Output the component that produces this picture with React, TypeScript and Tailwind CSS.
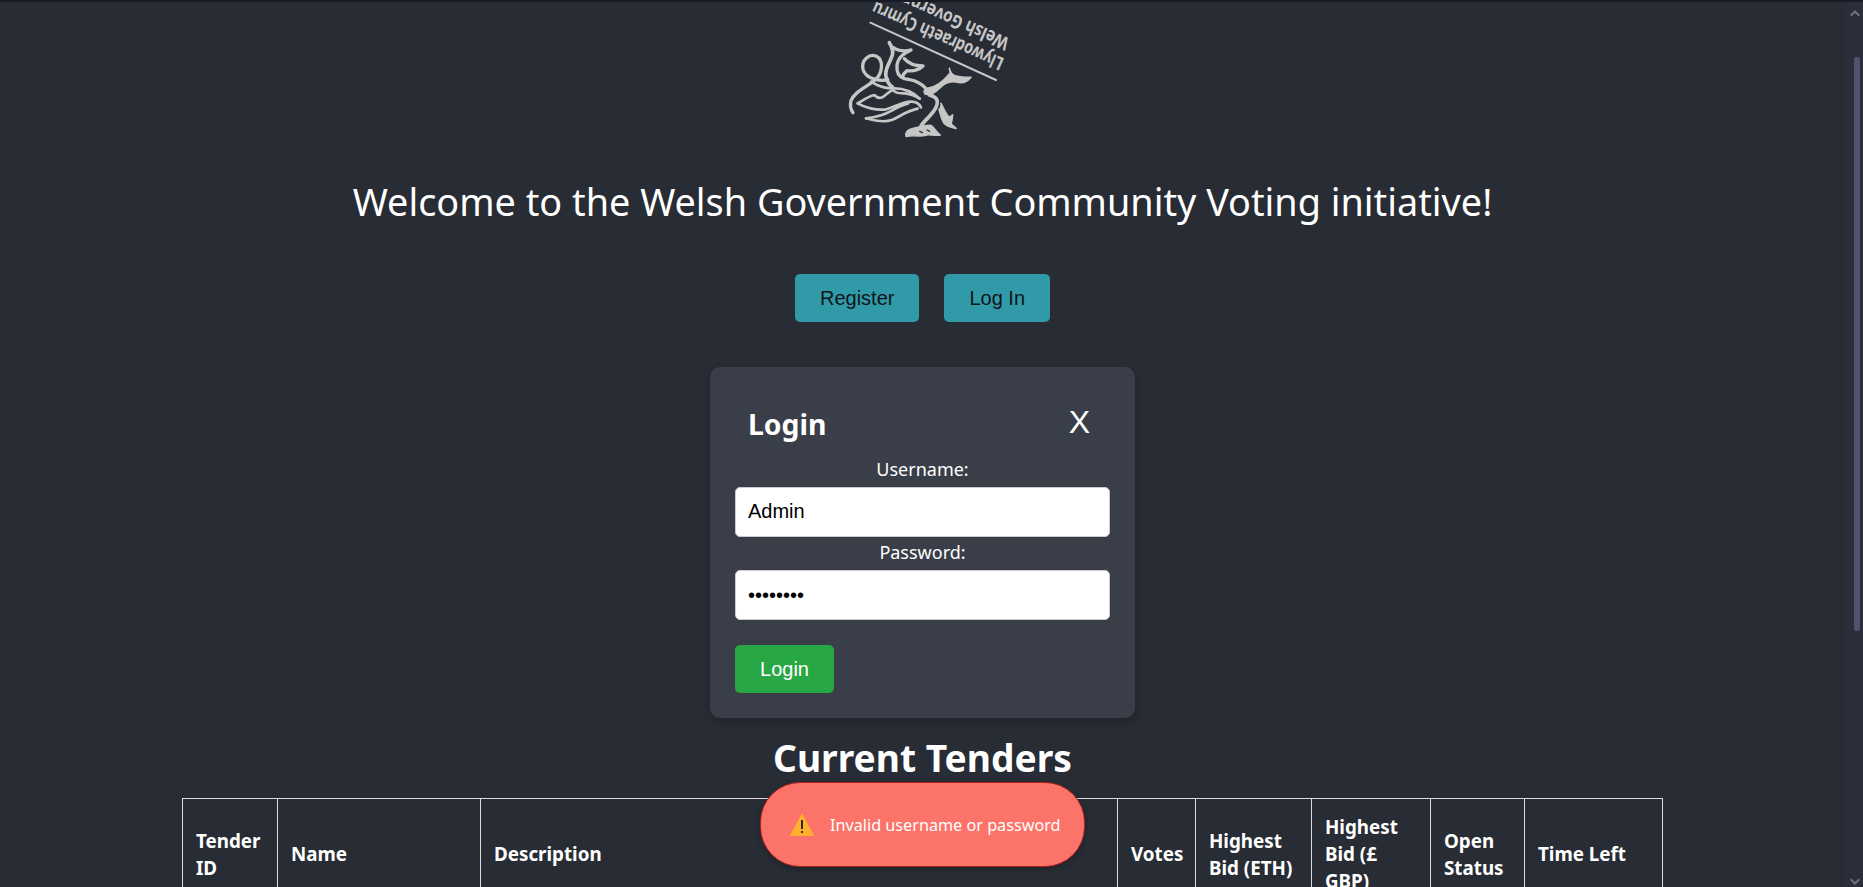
import React from "react";

const uiFont = "font-['Noto_Sans',sans-serif]";

const headers = ["Tender ID", "Name", "Description", "Votes", "Highest Bid (ETH)", "Highest Bid (£ GBP)", "Open Status", "Time Left"];
const widths = ["w-[95px]", "w-[203px]", "w-[637px]", "w-[78px]", "w-[116px]", "w-[119px]", "w-[94px]", "w-[138px]"];

const Logo = () => (
  <svg className="block ml-4 shrink-0" width="220" height="148" viewBox="0 6 660 444" fill="none" stroke="#c6c6c6" strokeWidth="8" strokeLinecap="round" strokeLinejoin="round">
    <text transform="rotate(204 552 176)" x="552" y="176" fill="#c6c6c6" stroke="none" fontFamily="'Noto Sans',sans-serif" fontWeight="700" fontSize="56" textLength="425" lengthAdjust="spacingAndGlyphs">Llywodraeth Cymru</text>
    <text transform="rotate(204 568 116)" x="568" y="116" fill="#c6c6c6" stroke="none" fontFamily="'Noto Sans',sans-serif" fontWeight="700" fontSize="56" textLength="440" lengthAdjust="spacingAndGlyphs">Welsh Government</text>
    <path d="M148 68L525 240" strokeWidth="6" />
    {/* tail loop */}
    <path d="M200 238C185 245 135 240 126 208C120 180 145 160 165 168C190 180 185 222 160 242C135 262 100 275 90 302C86 318 90 330 96 338" strokeWidth="10" />
    {/* back and neck */}
    <path d="M205 128C212 140 218 150 214 165C205 195 190 205 195 230C198 245 205 255 215 262" strokeWidth="11" />
    <path d="M216 142C235 155 250 155 270 150C250 160 232 170 228 195C226 215 232 230 250 236C275 240 300 245 318 270" strokeWidth="10" />
    <path d="M250 176C262 190 285 198 306 198C295 208 275 214 258 212C250 218 246 224 244 232" strokeWidth="10" />
    {/* forked limb */}
    <path d="M385 205C388 218 392 225 405 228C420 232 435 232 450 232C440 245 425 252 405 246C385 242 370 250 355 265C342 278 325 285 312 282C306 275 310 266 322 264C345 262 370 240 385 222" fill="#c6c6c6" strokeWidth="5" />
    <path d="M325 285C345 290 355 300 345 322C335 345 310 360 300 378" strokeWidth="11" />
    <path d="M360 310C368 325 375 345 385 352L395 345C394 355 392 365 390 372L405 385C390 382 375 378 368 368C360 355 358 340 354 328" fill="#c6c6c6" strokeWidth="5" />
    {/* head */}
    <path d="M255 410C252 398 258 388 275 385C295 382 315 372 330 376C340 382 342 392 358 405C345 408 330 404 318 405C295 412 275 404 255 410Z" fill="#c6c6c6" strokeWidth="4" />
    <path d="M296 394L304 398M318 390L326 394" stroke="#282c34" strokeWidth="4" />
    {/* wing folds */}
    <path d="M110 310C130 298 145 288 160 285C170 296 180 296 190 288C200 280 208 272 216 270C226 282 240 280 252 280C270 282 285 288 296 296" strokeWidth="8" />
    <path d="M110 310C130 322 165 332 195 328C220 322 245 305 270 305C285 305 295 312 300 322" strokeWidth="8" />
    <path d="M135 355C165 352 190 345 212 332C228 322 245 314 262 310" strokeWidth="8" />
    <path d="M135 355C160 362 190 368 212 360C235 352 250 335 290 326" strokeWidth="8" />
    <path d="M150 245C170 258 190 266 215 265C240 264 270 270 296 296" strokeWidth="8" />
  </svg>
);

const App = () => {
  return (
    <div className={`h-screen overflow-hidden bg-[#282c34] text-white flex flex-col relative ${uiFont}`}>
      <div className="h-[2px] shrink-0 bg-[#181a24]" />
      <div className="flex flex-1 min-h-0">
        <main className="flex-1 min-w-0 flex flex-col items-center overflow-hidden">
          <Logo />
          <h1 className="mt-[26px] text-[37.8px] leading-[51px] font-normal">Welcome to the Welsh Government Community Voting initiative!</h1>

          <div className="mt-[47px] flex gap-[25px] font-['Liberation_Sans',sans-serif] text-[20px] text-[#101418]">
            <button className="h-[48px] px-[25px] rounded-[5px] bg-[#309aa8]">Register</button>
            <button className="h-[48px] px-[25px] rounded-[5px] bg-[#309aa8]">Log In</button>
          </div>

          <div className="mt-[45px] w-[425px] shrink-0 rounded-[10px] bg-[#3a3e48] px-[25px] pt-[30px] pb-[25px] shadow-[0_4px_8px_rgba(0,0,0,0.2)]">
            <div className="h-[56px] flex items-center justify-between pl-[13px] pr-[20px]">
              <h2 className="text-[28.4px] font-bold -mt-[2px]">Login</h2>
              <button className="font-['Liberation_Sans',sans-serif] text-[32px] leading-none -mt-[6px]">X</button>
            </div>
            <label className="block h-[33px] text-center text-[18px] leading-[31px] mt-[1px]">Username:</label>
            <input readOnly value="Admin" className="block w-full h-[50px] rounded-[5px] bg-white border border-[#cccccc] px-[12px] pb-[2px] text-black font-['Liberation_Sans',sans-serif] text-[20px]" />
            <label className="block h-[33px] text-center text-[18px] leading-[31px]">Password:</label>
            <input readOnly type="password" value="password" className="block w-full h-[50px] rounded-[5px] bg-white border border-[#cccccc] px-[12px] text-black font-['Liberation_Sans',sans-serif] text-[20px]" />
            <button className="mt-[25px] block h-[48px] w-[99px] rounded-[5px] bg-[#28a745] text-white font-['Liberation_Sans',sans-serif] text-[20px]">Login</button>
          </div>

          <h2 className="mt-[15px] text-[37.2px] leading-[50px] font-bold">Current Tenders</h2>

          <table className="mt-[15px] w-[1480px] shrink-0 table-fixed border-collapse text-[18.8px] leading-[27px] font-bold">
            <colgroup>
              {widths.map((w) => (
                <col key={w} className={w} />
              ))}
            </colgroup>
            <thead>
              <tr>
                {headers.map((h) => (
                  <th key={h} className="border border-[#dddddd] px-[13px] py-[15px] text-left align-middle font-bold">{h}</th>
                ))}
              </tr>
            </thead>
          </table>
        </main>

        <aside className="w-[18px] shrink-0 bg-[#2b2e39] flex flex-col items-center justify-between pb-[2px]">
          <svg className="mt-[8px] ml-[1px]" width="10" height="7" viewBox="0 0 10 7" fill="#6f7178"><path d="M5 0L10 5L8.6 6.5L5 3L1.4 6.5L0 5Z" /></svg>
          <svg className="ml-[1px]" width="10" height="7" viewBox="0 0 10 7" fill="#6f7178"><path d="M5 7L10 2L8.6 .5L5 4L1.4 .5L0 2Z" /></svg>
        </aside>
      </div>

      {/* scrollbar thumb */}
      <div className="absolute left-[1854px] top-[57px] w-[6px] h-[574px] rounded-[2px] bg-[#50536c]" />

      {/* toast */}
      <div className="absolute left-[760px] top-[782px] w-[325px] h-[85px] rounded-[40px] bg-[#fb7369] border border-[#a8201a] shadow-[0_2px_6px_rgba(0,0,0,0.25)] flex items-center pl-[29px] gap-[16px]">
        <svg width="24" height="23" viewBox="0 0 24 23" className="shrink-0">
          <path d="M12 1L23.5 22.5H.5Z" fill="#ffb02e" stroke="#ffb02e" strokeLinejoin="round" />
          <path d="M12 7V16" stroke="#1a1a1a" strokeWidth="1.8" />
          <circle cx="12" cy="19" r="1.1" fill="#1a1a1a" />
        </svg>
        <span className="text-[16.2px] text-white whitespace-nowrap mt-[2px]">Invalid username or password</span>
      </div>
    </div>
  );
};

export default App;
